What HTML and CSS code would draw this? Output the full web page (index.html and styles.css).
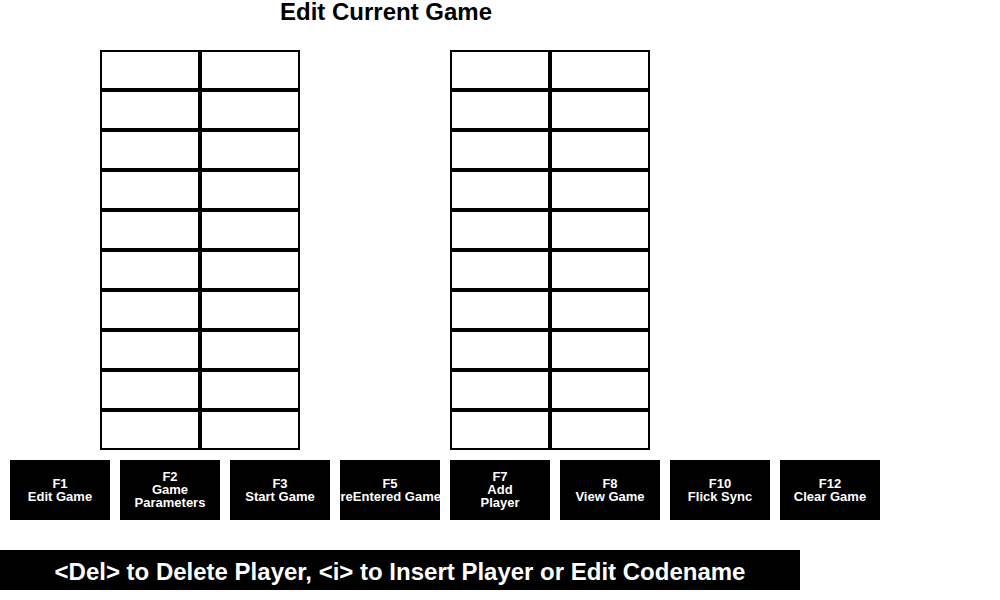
FILE: index.html
```html
<!DOCTYPE html>
<html lang="en">
<head>
<meta charset="utf-8">
<title>Edit Current Game</title>
<link rel="stylesheet" href="styles.css">
</head>
<body>
<main class="screen">
  <h1 class="title">Edit Current Game</h1>
  <form class="teams" id="teams"></form>
  <nav class="keys" aria-label="Function keys">
    <button type="button" class="key">F1<br>Edit Game</button>
    <button type="button" class="key">F2<br>Game<br>Parameters</button>
    <button type="button" class="key">F3<br>Start Game</button>
    <button type="button" class="key"><span class="label">F5<br>PreEntered Games</span></button>
    <button type="button" class="key">F7<br>Add<br>Player</button>
    <button type="button" class="key">F8<br>View Game</button>
    <button type="button" class="key">F10<br>Flick Sync</button>
    <button type="button" class="key">F12<br>Clear Game</button>
  </nav>
  <p class="hint">&lt;Del&gt; to Delete Player, &lt;i&gt; to Insert Player or Edit Codename</p>
</main>
<script src="script.js"></script>
</body>
</html>
```
FILE: styles.css
```css
* {
  box-sizing: border-box;
}

body {
  margin: 0;
  background: #fff;
  color: #000;
  font-family: "Liberation Sans", Arial, sans-serif;
  font-weight: 700;
}

.title {
  margin: 0 0 26px 280px;
  font-size: 24px;
  line-height: 24px;
}

.teams {
  display: flex;
  gap: 150px;
  margin-left: 100px;
}

.team {
  display: grid;
  grid-template-columns: 100px 100px;
  grid-auto-rows: 40px;
}

.slot {
  width: 100%;
  height: 100%;
  margin: 0;
  padding: 0 8px;
  border: 2px solid #000;
  border-radius: 0;
  background: #fff;
  font: inherit;
}

.keys {
  display: flex;
  gap: 10px;
  margin: 10px 0 0 10px;
}

.key {
  display: flex;
  align-items: center;
  justify-content: center;
  flex: 0 0 100px;
  height: 60px;
  padding: 0 0 1px;
  overflow: hidden;
  border: 0;
  background: #000;
  color: #fff;
  font: inherit;
  font-size: 13px;
  line-height: 13px;
  text-align: center;
}

.label {
  flex: none;
  white-space: nowrap;
}

.hint {
  width: 80%;
  margin: 30px 0 0;
  padding: 10px 0 6px;
  background: #000;
  color: #fff;
  font-size: 24px;
  line-height: 24px;
  text-align: center;
}
```
FILE: script.js
```js
const teams = document.getElementById("teams");
for (let t = 1; t <= 2; t++) {
  const team = document.createElement("div");
  team.className = "team";
  for (let row = 1; row <= 10; row++) {
    for (const field of ["player ID", "codename"]) {
      const slot = document.createElement("input");
      slot.type = "text";
      slot.className = "slot";
      slot.setAttribute("aria-label", `Team ${t} row ${row} ${field}`);
      team.append(slot);
    }
  }
  teams.append(team);
}
```
